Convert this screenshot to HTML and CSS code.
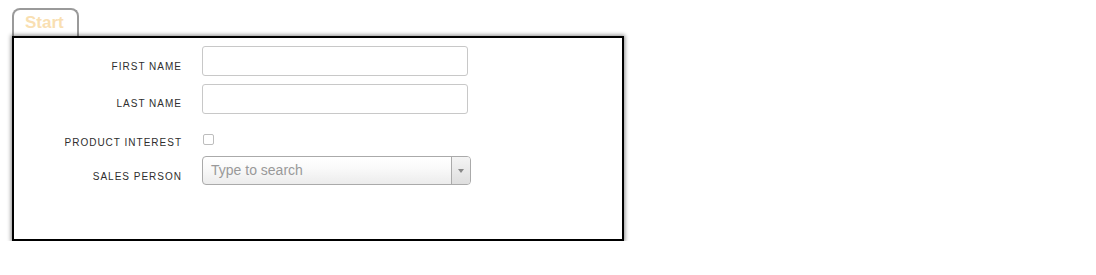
FILE: index.html
```html
<!DOCTYPE html>
<html>
<head>
<meta charset="utf-8">
<link rel="stylesheet" href="styles.css">
</head>
<body>
<div class="wrap">
  <div class="tab">Start</div>
  <div class="panel">
    <div class="row row1">
      <label class="lbl">First Name</label>
      <input class="field" type="text">
    </div>
    <div class="row row2">
      <label class="lbl">Last Name</label>
      <input class="field" type="text">
    </div>
    <div class="row row3">
      <label class="lbl">Product Interest</label>
      <input class="check" type="checkbox">
    </div>
    <div class="row row4">
      <label class="lbl">Sales Person</label>
      <div class="select">
        <span class="ph">Type to search</span>
        <span class="arrow"><span class="tri"></span></span>
      </div>
    </div>
  </div>
</div>
</body>
</html>
```
FILE: styles.css
```css
html, body {
  margin: 0;
  padding: 0;
  background: #fff;
  font-family: "Liberation Sans", Arial, sans-serif;
}
.wrap {
  padding: 8px 0 0 12px;
}
.tab {
  box-sizing: border-box;
  width: 67px;
  height: 28px;
  border: 2px solid #9a9a9a;
  border-bottom: none;
  border-radius: 8px 8px 0 0;
  padding-left: 11px;
  font-size: 17px;
  font-weight: bold;
  line-height: 26px;
  color: #f9dfb2;
  background: #fff;
}
.panel {
  box-sizing: border-box;
  width: 612px;
  height: 205px;
  border: 2px solid #000;
  box-shadow: 0 0 4px 1px rgba(0, 0, 0, 0.45);
  padding-top: 8px;
  background: #fff;
}
.row {
  display: flex;
  align-items: flex-start;
}
.lbl {
  box-sizing: border-box;
  width: 168px;
  flex: none;
  text-align: right;
  font-size: 10px;
  line-height: 12px;
  letter-spacing: 1px;
  text-transform: uppercase;
  color: #2e2e2e;
  margin-right: 20px;
}
.row1 { height: 30px; margin-bottom: 8px; }
.row1 .lbl { padding-top: 15px; }
.row2 { height: 30px; margin-bottom: 20px; }
.row2 .lbl { padding-top: 14px; }
.row3 { height: 22px; }
.row3 .lbl { padding-top: 3px; }
.row4 { height: 29px; }
.row4 .lbl { padding-top: 15px; }
.field {
  box-sizing: border-box;
  width: 266px;
  height: 30px;
  margin: 0;
  border: 1px solid #c8c8c8;
  border-radius: 3px;
  background: #fff;
  font-family: inherit;
  font-size: 14px;
}
.check {
  -webkit-appearance: none;
  appearance: none;
  box-sizing: border-box;
  width: 11px;
  height: 11px;
  margin: 0 0 0 1px;
  border: 1px solid #bdbdbd;
  border-radius: 2px;
  background: #fff;
}
.select {
  box-sizing: border-box;
  width: 269px;
  height: 29px;
  border: 1px solid #aaa;
  border-radius: 4px;
  display: flex;
  align-items: stretch;
  background: linear-gradient(to bottom, #fff 0%, #fafafa 40%, #ececec 100%);
  overflow: hidden;
}
.ph {
  flex: 1;
  padding-left: 8px;
  font-size: 14px;
  line-height: 27px;
  color: #999;
}
.arrow {
  width: 18px;
  border-left: 1px solid #aaa;
  background: linear-gradient(to bottom, #f4f4f4 0%, #dedede 100%);
  display: flex;
  align-items: center;
  justify-content: center;
}
.tri {
  width: 0;
  height: 0;
  border-left: 3px solid transparent;
  border-right: 3px solid transparent;
  border-top: 4px solid #888;
  margin-top: 1px;
}
```
